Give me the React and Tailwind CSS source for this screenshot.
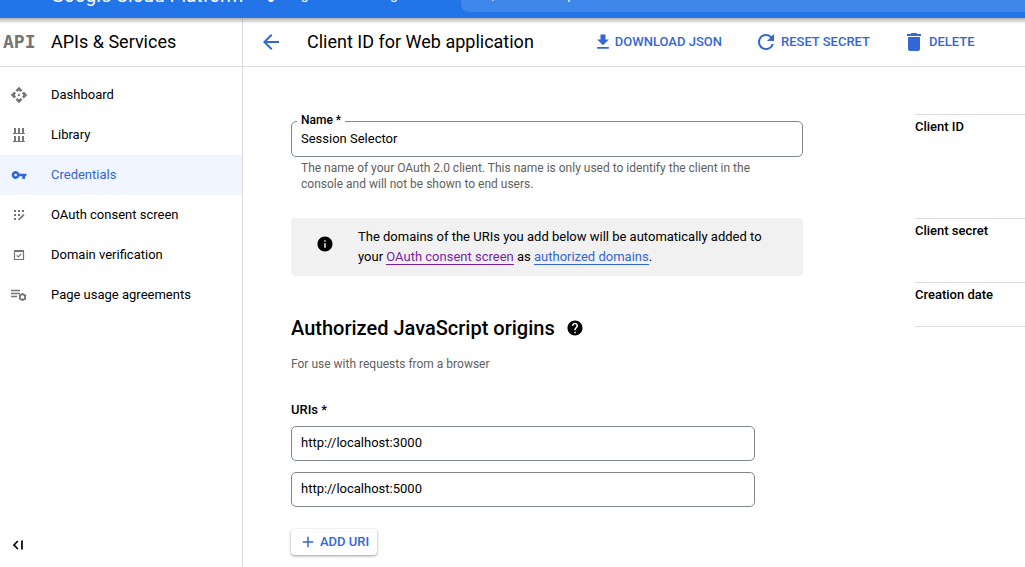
import {
  MdApi,
  MdArrowBack,
  MdAdd,
  MdDelete,
  MdFileDownload,
  MdHelp,
  MdInfo,
  MdRefresh,
  MdSearch,
  MdVpnKey,
} from "react-icons/md";

function LibraryIcon() {
  return (
    <svg width="14" height="16" viewBox="0 0 14 16" fill="currentColor" aria-hidden="true">
      <path d="M2 1h2v5H2zM6 1h2v5H6zM10 1h2v5h-2zM1 6h12v1H1zM2 9h2v5H2zM6 9h2v5H6zM10 9h2v5h-2zM1 14h12v1H1z" />
    </svg>
  );
}

function DomainIcon() {
  return (
    <svg width="12" height="12" viewBox="0 0 12 12" fill="none" stroke="currentColor" aria-hidden="true">
      <path d="M1.5 2v8.5h9V2" strokeWidth="1.2" />
      <path d="M1 2h10" strokeWidth="2" />
      <path d="M3.8 6.3l1.5 1.5 2.9-3" strokeWidth="1.2" />
    </svg>
  );
}

function AgreementsIcon() {
  return (
    <svg width="16" height="14" viewBox="0 0 16 14" fill="none" stroke="currentColor" aria-hidden="true">
      <path d="M0 2.5h9M0 5.5h9M0 8.5h6" strokeWidth="1.5" />
      <circle cx="11.5" cy="9" r="2.7" strokeWidth="1.7" />
      <path
        d="M11.5 5v1.6M11.5 11.4V13M8 7l1.5.8M13.5 10.2L15 11M8 11l1.5-.8M13.5 7.8L15 7"
        strokeWidth="1.8"
      />
    </svg>
  );
}

function ConsentIcon() {
  return (
    <svg width="12" height="12" viewBox="0 0 12 12" fill="currentColor" aria-hidden="true">
      <path d="M1 1h2v2H1zM5 1h2v2H5zM9 1h2v2H9zM1 5h2v2H1zM5 5h2v2H5zM1 9h2v2H1z" />
      <path d="M5.5 10.8L11 5.6" fill="none" stroke="currentColor" strokeWidth="1.7" />
    </svg>
  );
}

function CollapseIcon() {
  return (
    <svg width="12" height="12" viewBox="0 0 12 12" fill="none" stroke="currentColor" strokeWidth="1.7" aria-hidden="true">
      <path d="M5.8 2L2 6l3.8 4M10 1.5v9" />
    </svg>
  );
}

function ProjectIcon() {
  return (
    <svg width="20" height="20" viewBox="0 0 20 20" fill="currentColor" aria-hidden="true">
      <circle cx="4" cy="5" r="3" />
      <circle cx="16" cy="5" r="3" />
      <circle cx="10" cy="15" r="3" />
    </svg>
  );
}

const navItems = [
  { label: "Dashboard", icon: <MdApi size={18} /> },
  { label: "Library", icon: <LibraryIcon /> },
  { label: "Credentials", icon: <MdVpnKey size={16} />, active: true },
  { label: "OAuth consent screen", icon: <ConsentIcon /> },
  { label: "Domain verification", icon: <DomainIcon /> },
  { label: "Page usage agreements", icon: <AgreementsIcon /> },
];

const details = [
  { label: "Client ID", height: "min-h-[104px]" },
  { label: "Client secret", height: "min-h-16" },
  { label: "Creation date", height: "min-h-[45px]" },
];

function TopBar() {
  return (
    <header className="relative z-10 flex h-[18px] items-end overflow-hidden bg-[#2374e6] text-white">
      <div className="flex h-12 w-full shrink-0 items-center">
        <span className="ml-[51px] pt-1 text-[19px] leading-7 whitespace-nowrap">Google Cloud Platform</span>
        <button type="button" className="ml-[18px] flex items-center gap-2 text-sm whitespace-nowrap">
          <ProjectIcon />
          Sign-in with Google
        </button>
        <label className="ml-[52px] flex h-9 flex-1 items-center gap-6 rounded-l-lg bg-[#3e86e9] pl-4">
          <MdSearch size={20} className="shrink-0" />
          <input
            type="search"
            aria-label="Search"
            placeholder="Search products and resources"
            className="min-w-0 flex-1 bg-transparent text-sm outline-none placeholder:text-white"
          />
        </label>
      </div>
    </header>
  );
}

function Sidebar() {
  return (
    <aside className="flex w-[243px] shrink-0 flex-col border-r border-[#dadce0]">
      <div className="flex h-[49px] items-center border-b border-[#dadce0] pl-[3px]">
        <span className="w-12 font-['DejaVu_Sans_Mono',monospace] text-lg leading-6 font-bold text-[#757575]">API</span>
        <span className="text-lg leading-6">APIs &amp; Services</span>
      </div>
      <nav className="pt-2">
        {navItems.map((item) => (
          <a
            key={item.label}
            href="#"
            className={
              item.active
                ? "flex h-10 items-center bg-[#f0f5ff] text-[#3367d6]"
                : "flex h-10 items-center"
            }
          >
            <span
              className={
                item.active
                  ? "mr-[13px] flex w-[38px] justify-center"
                  : "mr-[13px] flex w-[38px] justify-center text-[#757575]"
              }
            >
              {item.icon}
            </span>
            {item.label}
          </a>
        ))}
      </nav>
      <button type="button" aria-label="Collapse menu" className="mt-auto mb-2 ml-1 flex size-7 items-center justify-center">
        <CollapseIcon />
      </button>
    </aside>
  );
}

function Toolbar() {
  return (
    <div className="flex h-[49px] items-center border-b border-[#dadce0] pl-4 whitespace-nowrap">
      <button type="button" aria-label="Back" className="mr-6 text-[#3367d6]">
        <MdArrowBack size={24} />
      </button>
      <h1 className="text-lg leading-6">Client ID for Web application</h1>
      <div className="ml-[59px] flex items-center gap-8 font-medium text-[#3367d6]">
        <button type="button" className="flex items-center gap-0.5">
          <MdFileDownload size={20} />
          DOWNLOAD JSON
        </button>
        <button type="button" className="flex items-center gap-[3px]">
          <MdRefresh size={24} />
          RESET SECRET
        </button>
        <button type="button" className="flex items-center gap-[3px]">
          <MdDelete size={24} />
          DELETE
        </button>
      </div>
    </div>
  );
}

function ClientForm() {
  return (
    <form className="flex flex-col items-start">
      <div className="relative mt-[7px] w-full">
        <label htmlFor="client-name" className="absolute -top-[9px] left-1.5 bg-white px-1 text-xs leading-4 font-medium">
          Name *
        </label>
        <input
          id="client-name"
          defaultValue="Session Selector"
          className="h-9 w-full rounded-[5px] border border-[#80868b] px-[9px] pb-0.5 outline-none"
        />
      </div>
      <p className="mt-[3px] px-2.5 text-xs leading-4 text-[#616161]">
        The name of your OAuth 2.0 client. This name is only used to identify the client in the console and
        will not be shown to end users.
      </p>
      <div className="mt-[26px] flex w-full rounded bg-[#f1f1f1] py-[9px] pr-8 pl-[25px]">
        <MdInfo size={18} className="mt-2 mr-6 shrink-0" />
        <p className="leading-5">
          The domains of the URIs you add below will be automatically added to your{" "}
          <a href="#" className="border-b border-[#7b1fa2] text-[#7b1fa2]">
            OAuth consent screen
          </a>{" "}
          as{" "}
          <a href="#" className="border-b border-[#3367d6] text-[#3367d6]">
            authorized domains
          </a>
          .
        </p>
      </div>
      <h2 className="mt-10 flex items-center gap-[11px] text-xl leading-6 font-medium">
        Authorized JavaScript origins
        <MdHelp size={18} />
      </h2>
      <p className="mt-4 text-xs leading-4 text-[#616161]">For use with requests from a browser</p>
      <fieldset className="mt-[30px] flex w-full flex-col gap-[11px] pr-12">
        <legend className="mb-2 leading-4 font-medium">URIs *</legend>
        <input
          aria-label="URI 1"
          defaultValue="http://localhost:3000"
          className="h-[35px] w-full rounded-[5px] border border-[#80868b] px-[9px] pb-0.5 outline-none"
        />
        <input
          aria-label="URI 2"
          defaultValue="http://localhost:5000"
          className="h-[35px] w-full rounded-[5px] border border-[#80868b] px-[9px] pb-0.5 outline-none"
        />
      </fieldset>
      <button
        type="button"
        className="mt-[22px] flex h-[26px] items-center gap-[3px] rounded bg-white px-2 font-medium text-[#3367d6] shadow-[0_1px_3px_rgba(0,0,0,0.4)]"
      >
        <MdAdd size={18} />
        ADD URI
      </button>
    </form>
  );
}

export default function App() {
  return (
    <div className="flex h-screen flex-col overflow-hidden bg-white font-['Roboto',sans-serif] text-[13px] text-black">
      <TopBar />
      <div className="relative flex min-h-0 flex-1">
        <Sidebar />
        <main className="flex min-w-0 flex-1 flex-col">
          <Toolbar />
          <div className="grid grid-cols-[minmax(0,512px)_minmax(110px,1fr)] gap-28 pt-[47px] pl-12">
            <ClientForm />
            <dl className="flex flex-col">
              {details.map((row) => (
                <div key={row.label} className={`${row.height} border-t border-[#dadce0] pt-1 last:border-b`}>
                  <dt className="leading-4 font-medium">{row.label}</dt>
                </div>
              ))}
            </dl>
          </div>
        </main>
        <div className="pointer-events-none absolute inset-x-0 top-0 h-1.5 bg-linear-to-b from-black/30 to-transparent" />
      </div>
    </div>
  );
}
